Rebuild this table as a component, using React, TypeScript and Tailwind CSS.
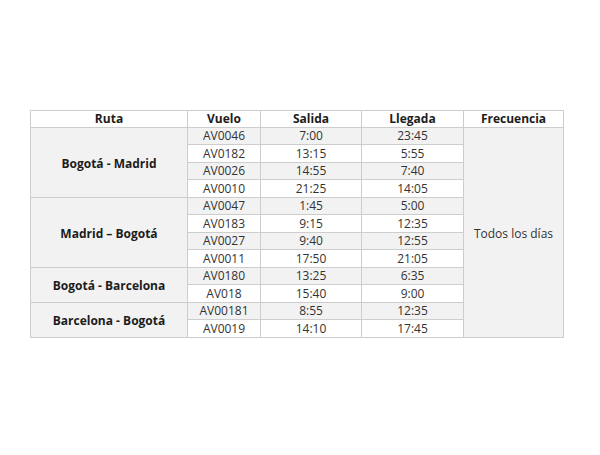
const groups = [
  {
    route: "Bogotá - Madrid",
    flights: [
      ["AV0046", "7:00", "23:45"],
      ["AV0182", "13:15", "5:55"],
      ["AV0026", "14:55", "7:40"],
      ["AV0010", "21:25", "14:05"],
    ],
  },
  {
    route: "Madrid – Bogotá",
    flights: [
      ["AV0047", "1:45", "5:00"],
      ["AV0183", "9:15", "12:35"],
      ["AV0027", "9:40", "12:55"],
      ["AV0011", "17:50", "21:05"],
    ],
  },
  {
    route: "Bogotá - Barcelona",
    flights: [
      ["AV0180", "13:25", "6:35"],
      ["AV018", "15:40", "9:00"],
    ],
  },
  {
    route: "Barcelona - Bogotá",
    flights: [
      ["AV00181", "8:55", "12:35"],
      ["AV0019", "14:10", "17:45"],
    ],
  },
];

const totalRows = groups.reduce((n, g) => n + g.flights.length, 0);

export default function App() {
  let rowIndex = 0;

  return (
    <div className="min-h-[455px] w-[600px] bg-white pt-[110px] pl-[30px] font-['Open_Sans',sans-serif] text-[12px] text-[#333333]">
      <table className="table-fixed border-collapse text-center leading-none">
        <colgroup>
          <col className="w-[157px]" />
          <col className="w-[73px]" />
          <col className="w-[101px]" />
          <col className="w-[102px]" />
          <col className="w-[100px]" />
        </colgroup>
        <thead>
          <tr className="h-[16.5px] font-bold text-[#1c1c1c]">
            <th className="border border-[#cdcdcd] p-0 pt-px">Ruta</th>
            <th className="border border-[#cdcdcd] p-0 pt-px">Vuelo</th>
            <th className="border border-[#cdcdcd] p-0 pt-px">Salida</th>
            <th className="border border-[#cdcdcd] p-0 pt-px">Llegada</th>
            <th className="border border-[#cdcdcd] p-0 pt-px">Frecuencia</th>
          </tr>
        </thead>
        <tbody>
          {groups.map((g) =>
            g.flights.map(([code, dep, arr], i) => {
              const striped = rowIndex % 2 === 0;
              const first = rowIndex === 0;
              rowIndex++;
              const cell = `border border-[#cdcdcd] p-0 pt-px ${striped ? "bg-[#f2f2f2]" : "bg-white"}`;
              return (
                <tr key={code} className="h-[17.5px]">
                  {i === 0 && (
                    <td
                      rowSpan={g.flights.length}
                      className="border border-[#cdcdcd] bg-[#f2f2f2] p-0 pt-[3px] font-bold text-[#1c1c1c]"
                    >
                      {g.route}
                    </td>
                  )}
                  <td className={cell}>{code}</td>
                  <td className={cell}>{dep}</td>
                  <td className={cell}>{arr}</td>
                  {first && (
                    <td rowSpan={totalRows} className="border border-[#cdcdcd] bg-[#f2f2f2] p-0 pt-[3px]">
                      Todos los días
                    </td>
                  )}
                </tr>
              );
            })
          )}
        </tbody>
      </table>
    </div>
  );
}
